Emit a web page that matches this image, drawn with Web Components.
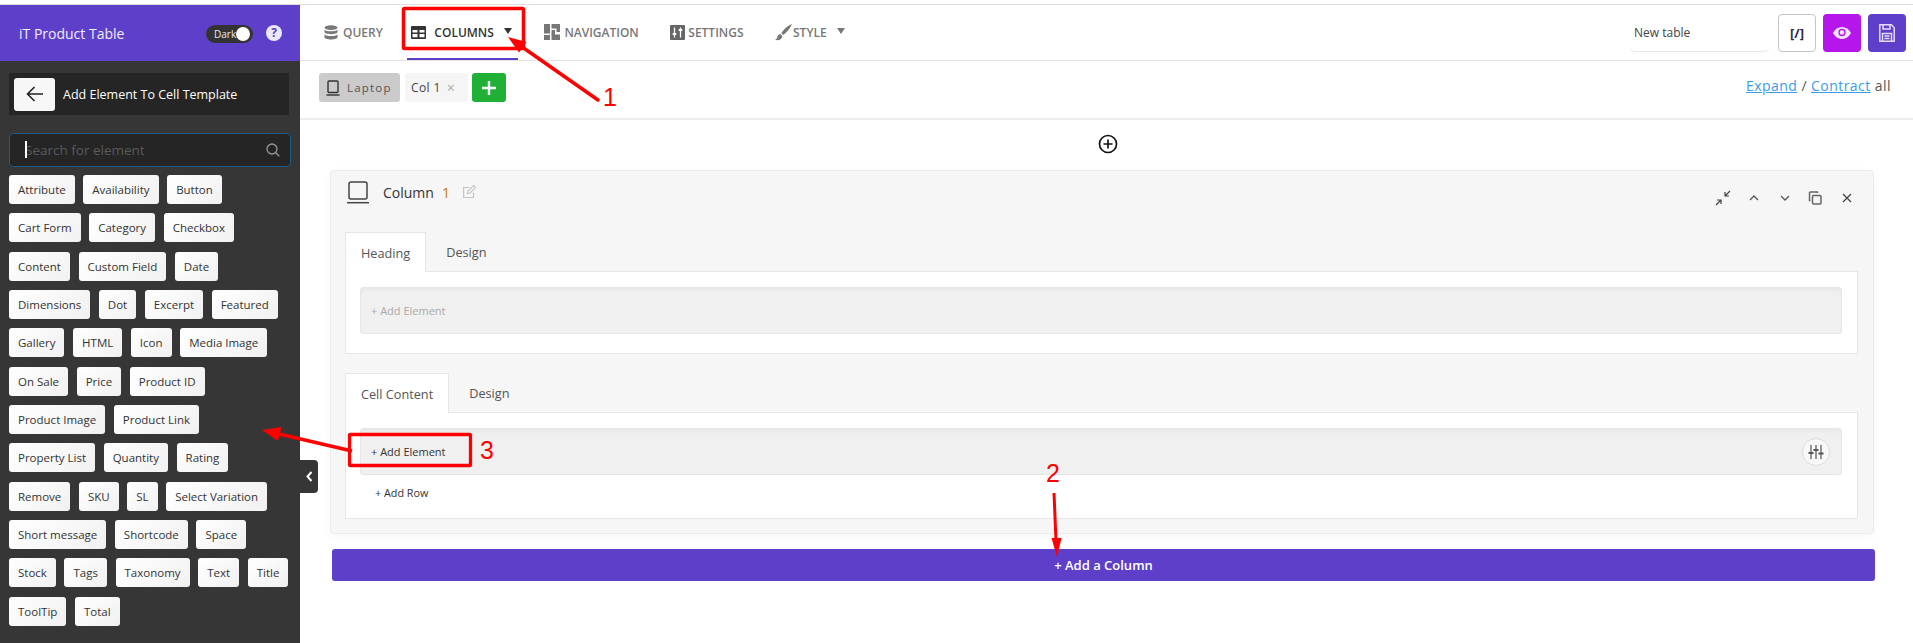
<!DOCTYPE html>
<html lang="en">
<head>
<meta charset="utf-8">
<title>iT Product Table</title>
<style>
  html, body { margin: 0; height: 643px; overflow: hidden; background: #fff; font-family: "Open Sans", "Liberation Sans", sans-serif; }
</style>
</head>
<body>
<it-app>
  <it-sidebar slot="side">
    <it-chip>Attribute</it-chip><it-chip>Availability</it-chip><it-chip>Button</it-chip>
    <it-chip>Cart Form</it-chip><it-chip>Category</it-chip><it-chip>Checkbox</it-chip>
    <it-chip>Content</it-chip><it-chip>Custom Field</it-chip><it-chip>Date</it-chip>
    <it-chip>Dimensions</it-chip><it-chip>Dot</it-chip><it-chip>Excerpt</it-chip><it-chip>Featured</it-chip>
    <it-chip>Gallery</it-chip><it-chip>HTML</it-chip><it-chip>Icon</it-chip><it-chip>Media Image</it-chip>
    <it-chip>On Sale</it-chip><it-chip>Price</it-chip><it-chip>Product ID</it-chip>
    <it-chip>Product Image</it-chip><it-chip>Product Link</it-chip>
    <it-chip>Property List</it-chip><it-chip>Quantity</it-chip><it-chip>Rating</it-chip>
    <it-chip>Remove</it-chip><it-chip>SKU</it-chip><it-chip>SL</it-chip><it-chip>Select Variation</it-chip>
    <it-chip>Short message</it-chip><it-chip>Shortcode</it-chip><it-chip>Space</it-chip>
    <it-chip>Stock</it-chip><it-chip>Tags</it-chip><it-chip>Taxonomy</it-chip><it-chip>Text</it-chip><it-chip>Title</it-chip>
    <it-chip>ToolTip</it-chip><it-chip>Total</it-chip>
  </it-sidebar>
  <it-toolbar slot="main">
    <it-menu-item icon="query">QUERY</it-menu-item>
    <it-menu-item icon="columns" active caret>COLUMNS</it-menu-item>
    <it-menu-item icon="navigation">NAVIGATION</it-menu-item>
    <it-menu-item icon="settings">SETTINGS</it-menu-item>
    <it-menu-item icon="style" caret>STYLE</it-menu-item>
  </it-toolbar>
  <it-subbar slot="main"></it-subbar>
  <it-canvas slot="main">
    <it-column-card>
      <it-tab-panel label="Heading" muted></it-tab-panel>
      <it-tab-panel label="Cell Content" rows></it-tab-panel>
    </it-column-card>
  </it-canvas>
</it-app>
<it-annotations></it-annotations>

<script>
const ICONS = {
  query: `<svg width="14" height="15" viewBox="0 0 14 15" fill="#777"><ellipse cx="7" cy="2.6" rx="6.5" ry="2.4"/><path d="M.5 4.4C1.6 5.9 4.2 6.3 7 6.3s5.400-.4 6.500-1.900v2.700C13.500 8.300 10.500 9.200 7 9.200S.5 8.300.5 7.100z"/><path d="M.5 9.200c1.100 1.500 3.700 1.900 6.500 1.900s5.400-.4 6.500-1.900v3.100C13.500 13.600 10.500 14.500 7 14.500S.5 13.600.5 12.300z"/></svg>`,
  columns: `<svg width="15" height="13" viewBox="0 0 15 13"><rect x="0" y="0" width="15" height="13" rx="1" fill="#333"/><path d="M1.500 4h5v2.500h-5zM8.500 4h5v2.500h-5zM1.500 8h5v3.300h-5zM8.500 8h5v3.300h-5z" fill="#fff"/></svg>`,
  navigation: `<svg width="16" height="16" viewBox="0 0 16 16" fill="#777"><path d="M0 0h6v9.500H0zM0 11h6v5H0zM7.500 0H16v8h-3.500V4.500h-5zM7.500 6H11v4.500h5V16H7.500z"/></svg>`,
  settings: `<svg width="15" height="15" viewBox="0 0 15 15"><rect width="15" height="15" rx="1" fill="#666"/><path d="M4.500 2.500v10M10.500 2.500v10" stroke="#fff" stroke-width="1.300"/><path d="M2.700 9h3.600M8.700 5h3.600" stroke="#fff" stroke-width="2"/></svg>`,
  style: `<svg width="17" height="17" viewBox="0 0 17 17" fill="#777"><path d="M17 0C13 1.500 8.500 5.500 6.300 9.200l2 1.900C11.800 8.500 15.500 4 17 0z"/><path d="M5.500 10c-2.300.2-3 1.800-3.300 3.600-.2 1-.9 1.600-2.200 2 2.400 1.300 6.700.8 7.400-3.400z"/></svg>`
};

const css = (s) => `<style>${s}</style>`;

class ItApp extends HTMLElement {
  constructor() {
    super();
    this.attachShadow({ mode: 'open' });
    this.shadowRoot.innerHTML = css(`
      :host { display: block; padding-top: 4px; height: 643px; box-sizing: border-box; }
      .wrap { display: flex; height: 639px; box-sizing: border-box; border-top: 1px solid #ddd; }
      .main { flex: 1; min-width: 0; display: flex; flex-direction: column; }
    `) + `<div class="wrap"><slot name="side"></slot><div class="main"><slot name="main"></slot></div></div>`;
  }
}

class ItSidebar extends HTMLElement {
  constructor() {
    super();
    this.attachShadow({ mode: 'open' });
    this.shadowRoot.innerHTML = css(`
      :host { display: block; width: 300px; flex: none; background: #363636; position: relative; }
      .head { height: 56px; background: #5e3fc9; display: flex; align-items: center; padding: 0 18px 0 19px; color: #fff; }
      .name { font-size: 14px; flex: 1; color: #f1eefc; }
      .toggle { width: 47px; height: 18px; border-radius: 9px; background: #333; display: flex; align-items: center; justify-content: space-between; padding: 0 3px 0 8px; box-sizing: border-box; font-size: 10px; color: #eee; margin-right: 13px; margin-top: 1px; }
      .knob { width: 14px; height: 14px; background: #fff; border-radius: 50%; }
      .help { width: 16px; height: 16px; border-radius: 50%; background: #ece8fb; color: #5e3fc9; font-size: 12px; font-weight: 700; display: flex; align-items: center; justify-content: center; margin-bottom: 1px; }
      .title { margin: 12px 11px 0 9px; height: 42px; background: #252525; display: flex; align-items: center; padding-left: 5px; gap: 8px; color: #fff; font-size: 12.500px; }
      .back { width: 41px; height: 33px; background: #f7f7f7; border-radius: 3px; display: flex; align-items: center; justify-content: center; }
      .search { margin: 18px 9px 0; height: 34px; box-sizing: border-box; background: #252525; border: 1px solid #1c5a85; border-radius: 4px; display: flex; align-items: center; padding: 0 10px 0 15px; color: #5a5a5a; font-size: 13.500px; justify-content: space-between; }
      .caret { position: absolute; left: 25px; top: 136px; width: 1.500px; height: 17px; background: #fff; }
      .chips { display: flex; flex-wrap: wrap; gap: 9.330px 8.600px; padding: 8px 0 0 9px; margin-right: 10px; }
      .collapse { position: absolute; left: 100%; top: 455px; width: 18px; height: 33px; background: #363636; border-radius: 0 4px 4px 0; display: flex; align-items: center; justify-content: center; }
    `) + `
      <div class="head">
        <span class="name">iT Product Table</span>
        <span class="toggle">Dark<span class="knob"></span></span>
        <span class="help">?</span>
      </div>
      <div class="title">
        <span class="back"><svg width="18" height="16" viewBox="0 0 18 16" fill="none" stroke="#222" stroke-width="1.600"><path d="M17 8H1.500M8.500 1 1.500 8l7 7"/></svg></span>
        <span>Add Element To Cell Template</span>
      </div>
      <div class="search">
        <span>Search for element</span>
        <svg width="14" height="14" viewBox="0 0 14 14" fill="none" stroke="#999" stroke-width="1.300"><circle cx="6" cy="6" r="5"/><path d="M9.800 9.800 13.300 13.300"/></svg>
      </div>
      <span class="caret"></span>
      <div class="chips"><slot></slot></div>
      <div class="collapse"><svg width="7" height="11" viewBox="0 0 7 11" fill="none" stroke="#fff" stroke-width="2"><path d="M5.500 1 1.500 5.500l4 4.500"/></svg></div>
    `;
  }
}

class ItChip extends HTMLElement {
  constructor() {
    super();
    this.attachShadow({ mode: 'open' });
    this.shadowRoot.innerHTML = css(`
      :host { display: flex; align-items: center; height: 29px; padding: 0 9px; box-sizing: border-box; background: linear-gradient(135deg, #fff, #f1f1f1); border-radius: 3px; color: #333; font-size: 11.500px; white-space: nowrap; }
    `) + `<slot></slot>`;
  }
}

class ItToolbar extends HTMLElement {
  constructor() {
    super();
    this.attachShadow({ mode: 'open' });
    this.shadowRoot.innerHTML = css(`
      :host { display: flex; align-items: stretch; height: 55px; border-bottom: 1px solid #e3e3e3; padding: 0 7px 0 20px; flex: none; }
      .menu { display: flex; gap: 21.500px; flex: 1; }
      .right { display: flex; align-items: center; gap: 7px; padding-top: 1px; }
      .name { width: 141px; height: 37px; box-sizing: border-box; border-bottom: 1px solid #e9e9e9; border-radius: 6px; font-size: 12px; color: #444; display: flex; align-items: center; padding-left: 5px; margin-right: 1px; }
      .btn { width: 38px; height: 38px; box-sizing: border-box; border-radius: 4px; display: flex; align-items: center; justify-content: center; }
      .code { border: 1px solid #c4c4c4; color: #2a2a3a; font-size: 13px; font-weight: 700; background: #fff; }
      .eye { background: #b516ec; }
      .save { background: #5e3fc9; }
    `) + `
      <div class="menu"><slot></slot></div>
      <div class="right">
        <div class="name">New table</div>
        <div class="btn code">[/]</div>
        <div class="btn eye"><svg width="18" height="12" viewBox="0 0 18 12"><path d="M0 6C2 2.300 5.300 0 9 0s7 2.300 9 6c-2 3.700-5.300 6-9 6S2 9.700 0 6z" fill="#f6e6fd"/><circle cx="9" cy="5.500" r="3.700" fill="#b516ec"/><circle cx="9" cy="5.500" r="2.300" fill="#f6e6fd"/></svg></div>
        <div class="btn save"><svg width="16" height="18" viewBox="0 0 16 18" fill="none" stroke="#e4dcfb" stroke-width="1.500"><path d="M.8.800h11.500l2.900 2.900v13.500H.8z"/><path d="M4 1v4h7V1M3.500 17v-7.500h9V17M5.500 12h5M5.500 14.500h5"/></svg></div>
      </div>
    `;
  }
}

class ItMenuItem extends HTMLElement {
  constructor() {
    super();
    this.attachShadow({ mode: 'open' });
  }

  connectedCallback() {
    const active = this.hasAttribute('active');
    const color = active ? '#333' : '#777';
    const icon = this.getAttribute('icon');
    const iconGap = { query: -1, columns: 2, navigation: -2, settings: -3, style: -5 }[icon];
    this.shadowRoot.innerHTML = css(`
      :host { display: flex; align-items: center; gap: 6px; padding: 1px 6px 0 4px; box-sizing: border-box; height: 55px; font-size: 12px; font-weight: 600; color: ${color}; border-bottom: ${active ? '2px solid #5e3fc9' : '2px solid transparent'}; ${active ? 'margin: 0 1px 0 -3px;' : ''} }
      .tri { width: 0; height: 0; border-left: 4px solid transparent; border-right: 4px solid transparent; border-top: 6px solid ${active ? '#333' : '#777'}; margin-left: 4px; margin-bottom: 2px; }
      svg { display: block; margin-right: ${iconGap}px; }
    `) + ICONS[icon] + `<slot></slot>` + (this.hasAttribute('caret') ? `<span class="tri"></span>` : '');
  }
}

class ItSubbar extends HTMLElement {
  constructor() {
    super();
    this.attachShadow({ mode: 'open' });
    this.shadowRoot.innerHTML = css(`
      :host { display: flex; align-items: flex-start; height: 59px; box-sizing: border-box; padding: 12px 22px 0 19px; border-bottom: 2px solid #ededed; flex: none; }
      .chip { height: 29px; border-radius: 3px; display: flex; align-items: center; font-size: 11.500px; box-sizing: border-box; }
      .device { width: 81px; background: #cbcbcb; color: #555; letter-spacing: 1.200px; padding-left: 7px; gap: 7px; }
      .col { width: 63px; background: #f5f5f5; color: #444; margin-left: 5px; padding-left: 6px; gap: 6px; letter-spacing: .4px; font-size: 12px; }
      .col i { font-style: normal; color: #aaa; font-size: 14px; }
      .add { width: 34px; background: #1fb035; margin-left: 4px; justify-content: center; }
      .links { margin-left: auto; font-size: 14px; color: #555; letter-spacing: .45px; padding-top: 3px; }
      a { color: #3d9be9; text-decoration: underline; }
    `) + `
      <div class="chip device"><svg width="14" height="16" viewBox="0 0 14 16" fill="none" stroke="#333" stroke-width="1.400"><rect x="2" y="1" width="10" height="11.500" rx="1"/><path d="M.5 15h13"/></svg>Laptop</div>
      <div class="chip col">Col 1 <i>×</i></div>
      <div class="chip add"><svg width="14" height="14" viewBox="0 0 14 14" stroke="#fff" stroke-width="2.400"><path d="M7 0v14M0 7h14"/></svg></div>
      <div class="links"><a>Expand</a> / <a>Contract</a> all</div>
    `;
  }
}

class ItCanvas extends HTMLElement {
  constructor() {
    super();
    this.attachShadow({ mode: 'open' });
    this.shadowRoot.innerHTML = css(`
      :host { display: block; flex: 1; padding: 14px 39px 0 30px; }
      .plus { display: flex; justify-content: center; height: 20px; margin: 0 0 16px 0; padding-left: 11px; }
      .more { height: 32px; margin: 15px -1px 0 2px; background: #5e3fc9; border-radius: 3px; color: #fff; font-size: 13px; font-weight: 600; display: flex; align-items: center; justify-content: center; }
    `) + `
      <div class="plus"><svg width="20" height="20" viewBox="0 0 20 20" fill="none" stroke="#111" stroke-width="1.700"><circle cx="10" cy="10" r="8.500"/><path d="M5.500 10h9M10 5.500v9"/></svg></div>
      <slot></slot>
      <div class="more">+ Add a Column</div>
    `;
  }
}

class ItColumnCard extends HTMLElement {
  constructor() {
    super();
    this.attachShadow({ mode: 'open' });
    this.shadowRoot.innerHTML = css(`
      :host { display: block; height: 364px; box-sizing: border-box; background: #f6f6f6; border: 1px solid #ececec; border-radius: 4px; padding: 0 15px 0 14px; box-shadow: 0 2px 10px rgba(0,0,0,.04); }
      .head { display: flex; align-items: center; height: 61px; padding: 0 0 18px 2px; box-sizing: border-box; font-size: 14px; color: #333; }
      .label { margin-left: 14px; }
      .num { color: #c27a00; margin-left: 8px; }
      .edit { margin-left: 13px; margin-bottom: 2px; }
      .tools { margin-left: auto; display: flex; align-items: center; gap: 15px; padding-right: 3px; padding-top: 10px; }
      .tools svg { display: block; }
      .stack { display: flex; flex-direction: column; gap: 19px; }
    `) + `
      <div class="head">
        <svg width="22" height="23" viewBox="0 0 22 23" fill="none" stroke="#444" stroke-width="1.500"><rect x="2" y="1" width="18" height="17" rx="2"/><path d="M0 21.700h22"/></svg>
        <span class="label">Column</span><span class="num">1</span>
        <svg class="edit" width="13" height="13" viewBox="0 0 13 13" fill="none" stroke="#c4c4c4" stroke-width="1.200"><path d="M10.500 7.500v5H.6V2.500h5.500"/><path d="M4.500 8.500l.5-2.500 5.500-5.400 2 2L7 8z"/></svg>
        <div class="tools">
          <svg width="16" height="16" viewBox="0 0 16 16" fill="none" stroke="#444" stroke-width="1.200"><path d="M15 1l-5 5M10 2v4h4M1 15l5-5M2 10h4v4"/></svg>
          <svg width="16" height="16" viewBox="0 0 16 16" fill="none" stroke="#555" stroke-width="1.300"><path d="M4 10l4-4 4 4"/></svg>
          <svg width="16" height="16" viewBox="0 0 16 16" fill="none" stroke="#555" stroke-width="1.300"><path d="M4 6l4 4 4-4"/></svg>
          <svg width="14" height="14" viewBox="0 0 14 14" fill="none" stroke="#666" stroke-width="1.500"><rect x="4.500" y="4.500" width="8.500" height="8.500" rx="1"/><path d="M2.500 9.500h-1V2a1 1 0 0 1 1-1h7v1"/></svg>
          <svg width="16" height="16" viewBox="0 0 16 16" fill="none" stroke="#444" stroke-width="1.300" style="margin-left:2px"><path d="M4 4l8 8M12 4l-8 8"/></svg>
        </div>
      </div>
      <div class="stack"><slot></slot></div>
    `;
  }
}

class ItTabPanel extends HTMLElement {
  constructor() {
    super();
    this.attachShadow({ mode: 'open' });
  }

  connectedCallback() {
    const muted = this.hasAttribute('muted');
    const rows = this.hasAttribute('rows');
    this.shadowRoot.innerHTML = css(`
      :host { display: block; font-size: 12.700px; }
      .tabs { display: flex; height: 39px; align-items: stretch; }
      .tab { padding: 0 15px; display: flex; align-items: center; color: #555; border: 1px solid transparent; border-bottom: 0; box-sizing: border-box; margin-right: 4px; }
      .tab.on { background: #fff; border-color: #e6e6e6; position: relative; z-index: 1; height: 40px; }
      .body { background: #fff; border: 1px solid #e6e6e6; padding: 15px 15px ${rows ? 18 : 19}px 14px; }
      .row { height: 47px; box-sizing: border-box; background: #f0f0f0; border: 1px solid #e6e6e6; border-radius: 3px; box-shadow: inset 0 4px 6px -4px rgba(0,0,0,.08); display: flex; align-items: center; padding-left: 10px; font-size: 11px; color: ${muted ? '#aaa' : '#333'}; justify-content: space-between; padding-right: 11px; }
      .tune { width: 28px; height: 28px; box-sizing: border-box; border-radius: 50%; background: #f8f8f8; border: 1px solid #ddd; display: flex; align-items: center; justify-content: center; }
      .addrow { font-size: 10.800px; color: #333; padding: 10px 0 0 15px; height: 15px; line-height: 15px; }
    `) + `
      <div class="tabs"><div class="tab on">${this.getAttribute('label')}</div><div class="tab">Design</div></div>
      <div class="body">
        <div class="row"><span>+ Add Element</span>${rows ? `<span class="tune"><svg width="16" height="14" viewBox="0 0 16 14" fill="none" stroke="#555" stroke-width="1.200"><path d="M3 0v14M8 0v14M13 0v14"/><path d="M.5 8h5M5.500 5h5M10.500 8.500h5" stroke-width="1.800"/></svg></span>` : ''}</div>
        ${rows ? `<div class="addrow">+ Add Row</div>` : ''}
      </div>
    `;
  }
}

// red callouts drawn on top of the screenshot
class ItAnnotations extends HTMLElement {
  constructor() {
    super();
    this.attachShadow({ mode: 'open' });
    this.shadowRoot.innerHTML = css(`
      :host { position: absolute; left: 0; top: 0; width: 1913px; height: 643px; pointer-events: none; }
      svg { display: block; }
      text { font-family: "Liberation Sans", sans-serif; fill: #f00; font-size: 25px; }
    `) + `
      <svg width="1913" height="643" viewBox="0 0 1913 643" fill="none">
        <rect x="403.500" y="8.500" width="120" height="40" rx="1" stroke="#f00" stroke-width="3.500"/>
        <path d="M598 100 520 45.500" stroke="#f00" stroke-width="3.500" stroke-linecap="round"/>
        <path d="M508 37 526.500 42 519 52.500z" fill="#f00"/>
        <text x="603" y="106">1</text>

        <path d="M1054 493 1056 541" stroke="#f00" stroke-width="3"/>
        <path d="M1057 557 1051.500 538H1061.500z" fill="#f00"/>
        <text x="1046" y="482">2</text>

        <rect x="349.500" y="434.500" width="121" height="31" rx="1" stroke="#f00" stroke-width="3.300"/>
        <path d="M352 451 278 433.800" stroke="#f00" stroke-width="3.500"/>
        <path d="M262 430 281.500 427 278 441z" fill="#f00"/>
        <text x="480" y="459">3</text>
      </svg>
    `;
  }
}

customElements.define('it-app', ItApp);
customElements.define('it-sidebar', ItSidebar);
customElements.define('it-chip', ItChip);
customElements.define('it-toolbar', ItToolbar);
customElements.define('it-menu-item', ItMenuItem);
customElements.define('it-subbar', ItSubbar);
customElements.define('it-canvas', ItCanvas);
customElements.define('it-column-card', ItColumnCard);
customElements.define('it-tab-panel', ItTabPanel);
customElements.define('it-annotations', ItAnnotations);
</script>
</body>
</html>
